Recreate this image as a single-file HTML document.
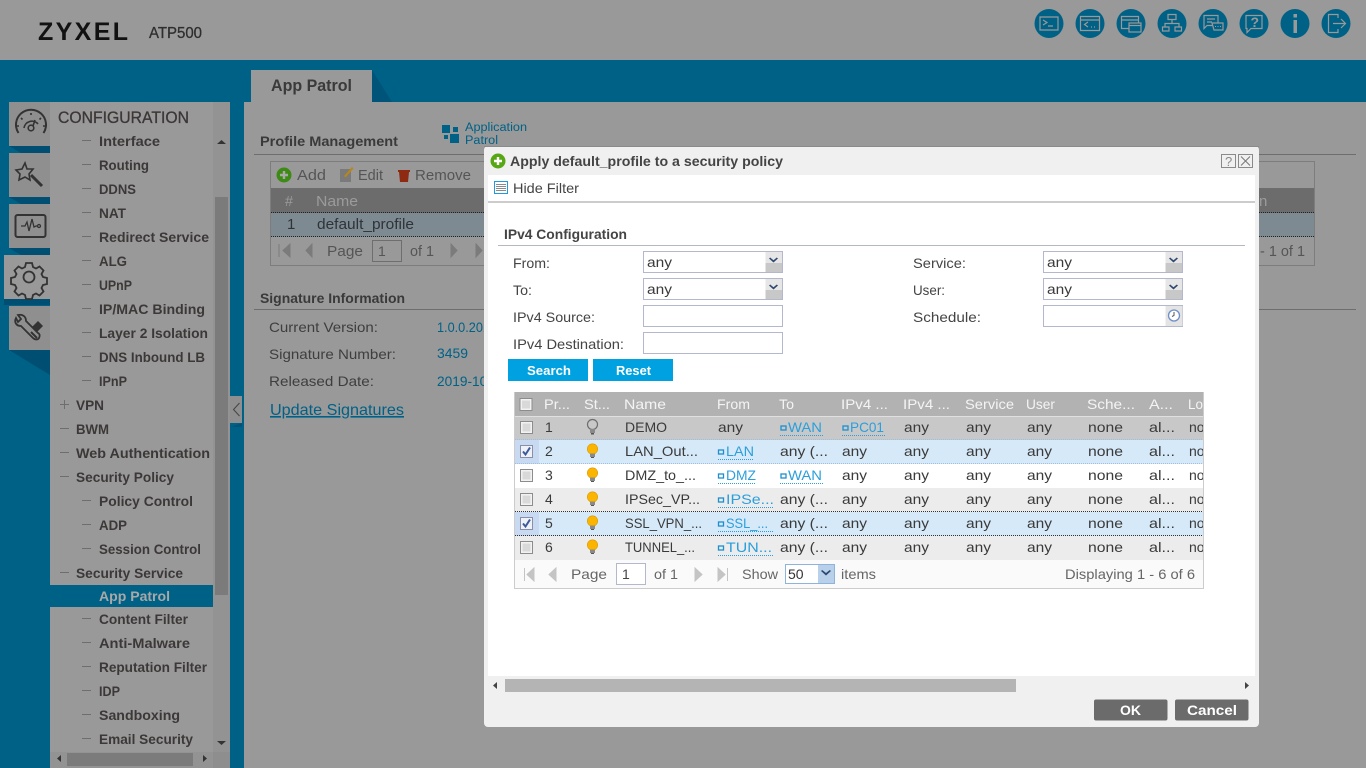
<!DOCTYPE html>
<html><head><meta charset="utf-8"><title>Zyxel ATP500</title>
<style>
html,body{margin:0;padding:0;width:1366px;height:768px;overflow:hidden;background:#006186}
svg{display:block}
text{font-family:"Liberation Sans",sans-serif;font-size:14px;fill:#3e3e3e}
.n text{font-weight:bold;fill:#3d3838;font-size:14px}
.d text{fill:#444;font-size:14px}
.g text{fill:#3a3a3a;font-size:14px}
.h text{fill:#f4f4f4;font-size:14px}
.i{fill:none;stroke:#999;stroke-width:1.2}
.t{fill:none;stroke:#333;stroke-width:1.6}
</style></head><body>
<svg xmlns="http://www.w3.org/2000/svg" width="1366" height="768" viewBox="0 0 1366 768">
<defs>
<clipPath id="gc"><rect x="515" y="392" width="688" height="196"/></clipPath>
<g id="bulb"><circle cx="0" cy="-1" r="5.2" fill="#fbb400" stroke="#d99b00" stroke-width=".6"/><path d="M-2.5 3.500h5v3.500h-5z" fill="#8a8a8a"/><path d="M-1.500 7h3v1h-3z" fill="#555"/></g>
<g id="cb"><rect x=".5" y=".5" width="12" height="12" fill="#f2f2f2" stroke="#8c8c8c"/><rect x="2.500" y="2.500" width="8" height="8" fill="#d9d9d9"/></g>
<g id="cbc"><rect x=".5" y=".5" width="12" height="12" fill="#eef1f7" stroke="#8a8fa8"/><path d="M3 6.500l2.500 3 4.500-7" fill="none" stroke="#3c5a9a" stroke-width="2"/></g>
<g id="sel"><rect x=".5" y=".5" width="139" height="21" fill="#fff" stroke="#b4b8cc"/><rect x="122.500" y="1" width="16.500" height="20" fill="#e6e6e6"/><rect x="122.500" y="12" width="16.500" height="9" fill="#c8c8c8"/><path d="M126 7.500l4.500 4 4.500-4-1.200-1-3.300 2.800-3.300-2.800z" fill="#2f4870"/></g>
<rect id="inp" x=".5" y=".5" width="139" height="21" fill="#fff" stroke="#b4b8cc"/>
<rect id="lk" x="0" y="0" width="5" height="4" fill="none" stroke="#1d8fd0" stroke-width="1.300"/>
</defs>

<rect width="1366" height="768" fill="#006186"/>
<rect width="1366" height="60" fill="#999"/>

<!-- header -->
<text x="38" y="40" style="font-size:25px;font-weight:bold;fill:#111" textLength="90" lengthAdjust="spacing">ZYXEL</text>
<text x="149" y="38" style="font-size:16px;fill:#2e2e2e;stroke:#2e2e2e;stroke-width:.3" textLength="53" lengthAdjust="spacingAndGlyphs">ATP500</text>

<g fill="#006186">
<circle cx="1049" cy="23.500" r="14.500"/><circle cx="1090" cy="23.500" r="14.500"/><circle cx="1131" cy="23.500" r="14.500"/><circle cx="1172" cy="23.500" r="14.500"/><circle cx="1213" cy="23.500" r="14.500"/><circle cx="1254" cy="23.500" r="14.500"/><circle cx="1295" cy="23.500" r="14.500"/><circle cx="1336" cy="23.500" r="14.500"/>
</g>
<path class="i" d="M1040 17h18v13h-18zM1043 20l4 2.500-4 2.500M1048 26h5"/>
<path class="i" d="M1080.500 16.500h19v14h-19zM1080.500 20h19M1088 22l-3.500 2.500 3.500 2.500M1091 27h1M1094 27h1"/>
<path class="i" d="M1121.500 16.500h17v12h-17zM1121.500 20h17"/>
<rect x="1129" y="23" width="12" height="9" fill="#006186" stroke="#999" stroke-width="1.200"/><path class="i" d="M1129 25.500h12"/>
<path class="i" d="M1168 14.500h8v5h-8zM1172 19.500v4M1165 27v-3.500h14v3.500M1162.500 27h6.500v4h-6.500zM1175 27h6.500v4h-6.500z"/>
<path class="i" d="M1204 15.500h14v10h-11l-3 3zM1207 19h8M1207 22h5"/>
<path d="M1212 23h11v7h-9z" fill="#006186" stroke="#999" stroke-width="1.200"/><path d="M1215 26.500h1M1217.500 26.500h1M1220 26.500h1" stroke="#999" fill="none"/>
<path class="i" d="M1246 15.500h16v13h-11l-4 4v-4h-1z"/>
<text x="1250.500" y="27" style="font-size:14px;font-weight:bold;fill:#999">?</text>
<path d="M1293.500 14h3.500v3.500h-3.500zM1293.500 20h3.500v13h-3.500z" fill="#999"/>
<path class="i" d="M1338 18v-3.500h-9.500v18h9.500v-3.500M1333 23.500h12M1341 19l4.500 4.500-4.500 4.500"/>

<!-- tab -->
<path d="M372 70l20 32h-20z" fill="#00547a"/>
<rect x="251" y="70" width="121" height="32" fill="#999"/>
<text x="271" y="91" style="font-size:17px;font-weight:bold;fill:#3a3a3a" textLength="81" lengthAdjust="spacingAndGlyphs">App Patrol</text>

<!-- content -->
<rect x="244" y="102" width="1122" height="666" fill="#999"/>

<!-- left icon tabs -->
<g fill="#004f72">
<path d="M9 146h41v7h-29z"/><path d="M9 197h41v7h-29z"/><path d="M9 248h41v7h-29z"/><path d="M4 299h46v6H4z"/><path d="M9 350h41v25z"/>
</g>
<g fill="#8f8f8f">
<rect x="9" y="102" width="41" height="44"/><rect x="9" y="153" width="41" height="44"/><rect x="9" y="204" width="41" height="44"/><rect x="9" y="306" width="41" height="44"/>
</g>
<rect x="4" y="255" width="46" height="44" fill="#999"/>
<path class="t" style="stroke-width:2" d="M18.500 133a15 15 0 1 1 25 0"/>
<path class="t" d="M24 128a8 8 0 0 1 14-4"/>
<circle class="t" cx="31" cy="128" r="2.800"/>
<path class="t" d="M33 126l2-6M31 113v2M21 118l1.500 1.500M41 118l-1.500 1.500M17 126h2M43 126h2"/>
<path class="t" d="M25 163l2 6 6 0-4 5 1 6-5-3-6 3 1-6-4-4 6-1z"/>
<path d="M31 175l11 11" stroke="#333" stroke-width="3" fill="none"/>
<rect x="15.500" y="215" width="30" height="22" rx="2" class="t" style="stroke-width:2"/>
<path class="t" style="stroke-width:1.300" d="M21 226h4l2-4 2 9 3-12 2 8 2-1h1"/><circle class="t" style="stroke-width:1.300" cx="39" cy="226" r="1.500"/>
<circle class="t" cx="29" cy="277" r="5.500" style="stroke-width:1.800"/>
<path class="t" style="stroke-width:1.800" d="M26 263h6l1 4 3 1.500 3.500-2 4 4-2 3.500 1.500 3 4 1v6l-4 1-1.500 3 2 3.500-4 4-3.500-2-3 1.500-1 4h-6l-1-4-3-1.500-3.500 2-4-4 2-3.500-1.500-3-4-1v-6l4-1 1.500-3-2-3.500 4-4 3.500 2 3-1.500z"/>
<path class="t" style="stroke-width:1.800" d="M16 318c-2 4 0 8 5 8l12 12c2 2 5 2 6 0s1-4-1-5l-12-12c0-5-4-7-8-6l3 4-3 3z"/>
<path d="M32 327l6-6 5 5-6 6z" fill="#333"/>
<path d="M31 332l6 6" stroke="#333" stroke-width="2" fill="none"/>

<!-- sidebar -->
<rect x="50" y="102" width="180" height="666" fill="#999"/>
<rect x="213" y="102" width="17" height="650" fill="#939393"/>
<rect x="215" y="197" width="13" height="398" fill="#7b7b7b"/>
<path d="M217 144h9l-4.500-4z M217 741h9l-4.500 4z" fill="#333"/>
<rect x="50" y="585" width="163" height="22" fill="#006186"/>
<rect x="50" y="752" width="180" height="16" fill="#939393"/>
<rect x="67" y="753" width="126" height="13" fill="#7b7b7b"/>
<path d="M61 755v7l-4-3.500zM203 755v7l4-3.500z" fill="#333"/>
<rect x="213" y="752" width="17" height="16" fill="#8e8e8e"/>
<text x="58" y="123" style="font-size:17px;fill:#3c3636;stroke:#3c3636;stroke-width:.3" textLength="131" lengthAdjust="spacingAndGlyphs">CONFIGURATION</text>
<g stroke="#6e6e6e" stroke-width="1" fill="none">
<path d="M82 140.500h9M82 164.500h9M82 188.500h9M82 212.500h9M82 236.500h9M82 260.500h9M82 284.500h9M82 308.500h9M82 332.500h9M82 356.500h9M82 380.500h9M60 404.500h9M64.500 400v9M60 428.500h9M60 452.500h9M60 476.500h9M82 500.500h9M82 524.500h9M82 548.500h9M60 572.500h9M82 618.500h9M82 642.500h9M82 666.500h9M82 690.500h9M82 714.500h9M82 738.500h9"/>
</g>
<g class="n">
<text x="99" y="146" textLength="61" lengthAdjust="spacingAndGlyphs">Interface</text>
<text x="99" y="170" textLength="50" lengthAdjust="spacingAndGlyphs">Routing</text>
<text x="99" y="194" textLength="37" lengthAdjust="spacingAndGlyphs">DDNS</text>
<text x="99" y="218" textLength="27" lengthAdjust="spacingAndGlyphs">NAT</text>
<text x="99" y="242" textLength="110" lengthAdjust="spacingAndGlyphs">Redirect Service</text>
<text x="99" y="266" textLength="28" lengthAdjust="spacingAndGlyphs">ALG</text>
<text x="99" y="290" textLength="33" lengthAdjust="spacingAndGlyphs">UPnP</text>
<text x="99" y="314" textLength="106" lengthAdjust="spacingAndGlyphs">IP/MAC Binding</text>
<text x="99" y="338" textLength="109" lengthAdjust="spacingAndGlyphs">Layer 2 Isolation</text>
<text x="99" y="362" textLength="106" lengthAdjust="spacingAndGlyphs">DNS Inbound LB</text>
<text x="99" y="386" textLength="28" lengthAdjust="spacingAndGlyphs">IPnP</text>
<text x="76" y="410" textLength="28" lengthAdjust="spacingAndGlyphs">VPN</text>
<text x="76" y="434" textLength="33" lengthAdjust="spacingAndGlyphs">BWM</text>
<text x="76" y="458" textLength="134" lengthAdjust="spacingAndGlyphs">Web Authentication</text>
<text x="76" y="482" textLength="98" lengthAdjust="spacingAndGlyphs">Security Policy</text>
<text x="99" y="506" textLength="94" lengthAdjust="spacingAndGlyphs">Policy Control</text>
<text x="99" y="530" textLength="28" lengthAdjust="spacingAndGlyphs">ADP</text>
<text x="99" y="554" textLength="102" lengthAdjust="spacingAndGlyphs">Session Control</text>
<text x="76" y="578" textLength="107" lengthAdjust="spacingAndGlyphs">Security Service</text>
<text x="99" y="601" textLength="71" lengthAdjust="spacingAndGlyphs" style="fill:#a8a8a8">App Patrol</text>
<text x="99" y="624" textLength="89" lengthAdjust="spacingAndGlyphs">Content Filter</text>
<text x="99" y="648" textLength="91" lengthAdjust="spacingAndGlyphs">Anti-Malware</text>
<text x="99" y="672" textLength="108" lengthAdjust="spacingAndGlyphs">Reputation Filter</text>
<text x="99" y="696" textLength="21" lengthAdjust="spacingAndGlyphs">IDP</text>
<text x="99" y="720" textLength="81" lengthAdjust="spacingAndGlyphs">Sandboxing</text>
<text x="99" y="744" textLength="94" lengthAdjust="spacingAndGlyphs">Email Security</text>
</g>
<!-- collapse handle -->
<path d="M230 427h12v-4z" fill="#00547a"/>
<rect x="230" y="396" width="12" height="27" fill="#8f8f8f"/>
<path d="M239.500 403l-6 6.500 6 6.500" fill="none" stroke="#444" stroke-width="1"/>

<!-- profile management -->
<text x="260" y="146" style="font-size:14px;font-weight:bold;fill:#3a3a3a" textLength="138" lengthAdjust="spacingAndGlyphs">Profile Management</text>
<path d="M254 154.500h1102" stroke="#6e6e6e"/>
<g fill="#006186"><rect x="442" y="125" width="8" height="8"/><rect x="453" y="127" width="5" height="5"/><rect x="444" y="135" width="4" height="4"/><rect x="450" y="134" width="9" height="9"/></g>
<text x="465" y="131" style="font-size:11.500px;fill:#006186" textLength="62" lengthAdjust="spacingAndGlyphs">Application</text>
<text x="465" y="144" style="font-size:11.500px;fill:#006186" textLength="33" lengthAdjust="spacingAndGlyphs">Patrol</text>

<rect x="270.500" y="161.500" width="1044" height="104" fill="none" stroke="#7d7d7d"/>
<circle cx="284" cy="175" r="7.500" fill="#3d8a14"/><path d="M280 175h8M284 171v8" stroke="#a8a8a8" stroke-width="2.400"/>
<text x="297" y="180" style="font-size:15px;fill:#555" textLength="29" lengthAdjust="spacingAndGlyphs">Add</text>
<rect x="340" y="169" width="11" height="13" fill="#7a7a7a"/><path d="M344 176l8-9 1.500 1.500-8 9z" fill="#b8861b"/>
<text x="358" y="180" style="font-size:15px;fill:#555" textLength="25" lengthAdjust="spacingAndGlyphs">Edit</text>
<path d="M398 170h12v2h-1l-1 10h-8l-1-10h-1z" fill="#8e2a12"/>
<text x="415" y="180" style="font-size:15px;fill:#555" textLength="56" lengthAdjust="spacingAndGlyphs">Remove</text>
<rect x="271" y="188" width="1043" height="25" fill="#6c6c6c"/>
<rect x="271" y="213" width="1043" height="24" fill="#7e8a92"/>
<path d="M271 212.500h1043M271 236.500h1043" stroke="#222" stroke-dasharray="1 1"/>
<text x="285" y="206" style="font-size:15px;fill:#9b9b9b" textLength="8" lengthAdjust="spacingAndGlyphs">#</text>
<text x="316" y="206" style="font-size:15px;fill:#9b9b9b" textLength="42" lengthAdjust="spacingAndGlyphs">Name</text>
<text x="287" y="229" style="font-size:15px;fill:#2e3338">1</text>
<text x="317" y="229" style="font-size:15px;fill:#2e3338" textLength="97" lengthAdjust="spacingAndGlyphs">default_profile</text>
<path d="M279 244v13M290 244l-7 6.500 7 6.500zM312 244l-6 6.500 6 6.500zM451 244l6 6.500-6 6.500zM476 244l6 6.500-6 6.500z" fill="#7b7b7b" stroke="#7b7b7b"/>
<text x="327" y="256" style="font-size:15px;fill:#555" textLength="36" lengthAdjust="spacingAndGlyphs">Page</text>
<rect x="372.500" y="240.500" width="29" height="21" fill="#999" stroke="#6e6e6e"/>
<text x="378" y="256" style="font-size:14px;fill:#555">1</text>
<text x="410" y="256" style="font-size:15px;fill:#555" textLength="24" lengthAdjust="spacingAndGlyphs">of 1</text>
<text x="1260" y="256" style="font-size:15px;fill:#555" textLength="45" lengthAdjust="spacingAndGlyphs">- 1 of 1</text>
<text x="1259" y="206" style="font-size:15px;fill:#9b9b9b">n</text>

<text x="260" y="303" style="font-size:14px;font-weight:bold;fill:#3a3a3a" textLength="145" lengthAdjust="spacingAndGlyphs">Signature Information</text>
<path d="M254 309.500h1102" stroke="#6e6e6e"/>
<text x="269" y="332" style="font-size:14px;fill:#3e3e3e" textLength="109" lengthAdjust="spacingAndGlyphs">Current Version:</text>
<text x="269" y="359" style="font-size:14px;fill:#3e3e3e" textLength="127" lengthAdjust="spacingAndGlyphs">Signature Number:</text>
<text x="269" y="386" style="font-size:14px;fill:#3e3e3e" textLength="105" lengthAdjust="spacingAndGlyphs">Released Date:</text>
<text x="437" y="332" style="font-size:14px;fill:#006186" textLength="60" lengthAdjust="spacingAndGlyphs">1.0.0.2019</text>
<text x="437" y="358" style="font-size:14px;fill:#006186" textLength="31" lengthAdjust="spacingAndGlyphs">3459</text>
<text x="437" y="386" style="font-size:14px;fill:#006186" textLength="70" lengthAdjust="spacingAndGlyphs">2019-10-10</text>
<text x="270" y="415" style="font-size:16px;fill:#006186;text-decoration:underline" textLength="134" lengthAdjust="spacingAndGlyphs">Update Signatures</text>

<!-- modal -->
<rect x="484" y="146" width="775" height="581" rx="4" fill="#f0f0f0"/>
<path d="M484 146.500h775" stroke="#8a8a8a"/>
<rect x="488" y="175" width="767" height="501" fill="#fff"/>
<circle cx="498" cy="161" r="7.500" fill="#57a614"/><path d="M494 161h8M498 157v8" stroke="#fff" stroke-width="2.400"/>
<text x="510" y="166" style="font-size:14px;font-weight:bold;fill:#444" textLength="273" lengthAdjust="spacingAndGlyphs">Apply default_profile to a security policy</text>
<rect x="1221.500" y="154.500" width="14" height="13" fill="none" stroke="#8a8a8a"/>
<text x="1225" y="166" style="font-size:13px;fill:#8a8a8a">?</text>
<rect x="1238.500" y="154.500" width="14" height="13" fill="none" stroke="#8a8a8a"/>
<path d="M1241 156.500l9 9M1250 156.500l-9 9" stroke="#777" fill="none"/>

<rect x="494.500" y="181.500" width="13" height="12" fill="#fff" stroke="#1f9bdc"/>
<path d="M496 184.500h10M496 186.500h10M496 188.500h10M496 190.500h10" stroke="#8a8a8a"/>
<text x="513" y="193" style="font-size:14px;fill:#444" textLength="66" lengthAdjust="spacingAndGlyphs">Hide Filter</text>
<rect x="488" y="201" width="767" height="2" fill="#ccc"/>

<text x="504" y="239" style="font-size:14px;font-weight:bold;fill:#444" textLength="123" lengthAdjust="spacingAndGlyphs">IPv4 Configuration</text>
<path d="M498 245.500h747" stroke="#b4b8c0"/>

<g class="d">
<text x="513" y="268" textLength="37" lengthAdjust="spacingAndGlyphs">From:</text>
<text x="513" y="295" textLength="19" lengthAdjust="spacingAndGlyphs">To:</text>
<text x="513" y="322" textLength="82" lengthAdjust="spacingAndGlyphs">IPv4 Source:</text>
<text x="513" y="349" textLength="111" lengthAdjust="spacingAndGlyphs">IPv4 Destination:</text>
<text x="913" y="268" textLength="53" lengthAdjust="spacingAndGlyphs">Service:</text>
<text x="913" y="295" textLength="32" lengthAdjust="spacingAndGlyphs">User:</text>
<text x="913" y="322" textLength="68" lengthAdjust="spacingAndGlyphs">Schedule:</text>
</g>
<use href="#sel" x="643" y="251"/><use href="#sel" x="643" y="278"/><use href="#inp" x="643" y="305"/><use href="#inp" x="643" y="332"/>
<use href="#sel" x="1043" y="251"/><use href="#sel" x="1043" y="278"/><use href="#inp" x="1043" y="305"/>
<rect x="1165.500" y="306" width="17" height="20" fill="#e4e4e4"/>
<circle cx="1174" cy="315.500" r="5.500" fill="#fff" stroke="#6f8fc8" stroke-width="1.300"/><path d="M1174 312v3.500l-2 1" stroke="#555" fill="none"/>
<g class="g">
<text x="647" y="267" textLength="25" lengthAdjust="spacingAndGlyphs">any</text>
<text x="647" y="294" textLength="25" lengthAdjust="spacingAndGlyphs">any</text>
<text x="1047" y="267" textLength="25" lengthAdjust="spacingAndGlyphs">any</text>
<text x="1047" y="294" textLength="25" lengthAdjust="spacingAndGlyphs">any</text>
</g>
<rect x="508" y="359" width="80" height="22" fill="#00a1e0"/>
<rect x="593" y="359" width="80" height="22" fill="#00a1e0"/>
<text x="527" y="375" style="font-size:13px;font-weight:bold;fill:#fff" textLength="44" lengthAdjust="spacingAndGlyphs">Search</text>
<text x="616" y="375" style="font-size:13px;font-weight:bold;fill:#fff" textLength="35" lengthAdjust="spacingAndGlyphs">Reset</text>

<!-- grid -->
<rect x="514.500" y="392.500" width="689" height="196" fill="#fafafa" stroke="#ccc"/>
<rect x="515" y="392" width="688" height="24" fill="#b2b2b2"/>
<path d="M515 416.500h688" stroke="#e0e0e0"/>
<rect x="515" y="417" width="688" height="23" fill="#c8c8c8"/>
<rect x="515" y="440" width="688" height="24" fill="#d6e9f8"/>
<rect x="515" y="464" width="688" height="24" fill="#fff"/>
<rect x="515" y="488" width="688" height="24" fill="#ececec"/>
<rect x="515" y="512" width="688" height="24" fill="#d6e9f8"/>
<rect x="515" y="536" width="688" height="24" fill="#ececec"/>
<rect x="515" y="440" width="24" height="24" fill="#c8daf2"/>
<rect x="515" y="512" width="24" height="24" fill="#c8daf2"/>
<path d="M515 439.500h688M515 463.500h688" stroke="#9fbfe0" stroke-dasharray="1 1"/>
<path d="M515 511.500h688M515 535.500h688" stroke="#333" stroke-dasharray="1 1"/>

<use href="#cb" x="519.500" y="398"/>
<use href="#cb" x="520" y="421"/><use href="#cbc" x="520" y="445"/><use href="#cb" x="520" y="469"/><use href="#cb" x="520" y="493"/><use href="#cbc" x="520" y="517"/><use href="#cb" x="520" y="541"/>

<g class="h" clip-path="url(#gc)">
<text x="544" y="409" textLength="26" lengthAdjust="spacingAndGlyphs">Pr...</text>
<text x="584" y="409" textLength="26" lengthAdjust="spacingAndGlyphs">St...</text>
<text x="624" y="409" textLength="42" lengthAdjust="spacingAndGlyphs">Name</text>
<text x="717" y="409" textLength="33" lengthAdjust="spacingAndGlyphs">From</text>
<text x="779" y="409" textLength="15" lengthAdjust="spacingAndGlyphs">To</text>
<text x="841" y="409" textLength="47" lengthAdjust="spacingAndGlyphs">IPv4 ...</text>
<text x="903" y="409" textLength="47" lengthAdjust="spacingAndGlyphs">IPv4 ...</text>
<text x="965" y="409" textLength="49" lengthAdjust="spacingAndGlyphs">Service</text>
<text x="1026" y="409" textLength="29" lengthAdjust="spacingAndGlyphs">User</text>
<text x="1087" y="409" textLength="48" lengthAdjust="spacingAndGlyphs">Sche...</text>
<text x="1149" y="409" textLength="24" lengthAdjust="spacingAndGlyphs">A...</text>
<text x="1188" y="409" textLength="15" lengthAdjust="spacingAndGlyphs">Lo</text>
</g>

<circle cx="592.500" cy="424.500" r="5" fill="none" stroke="#6e6e6e" stroke-width="1.200"/><path d="M590 429h5v4h-5z" fill="#8a8a8a"/><path d="M591 433h3v1.500h-3z" fill="#555"/>
<use href="#bulb" x="592.500" y="450"/><use href="#bulb" x="592.500" y="474"/><use href="#bulb" x="592.500" y="498"/><use href="#bulb" x="592.500" y="522"/><use href="#bulb" x="592.500" y="546"/>

<g class="g" clip-path="url(#gc)">
<text x="545" y="432">1</text><text x="545" y="456">2</text><text x="545" y="480">3</text><text x="545" y="504">4</text><text x="545" y="528">5</text><text x="545" y="552">6</text>
<text x="625" y="432" textLength="42" lengthAdjust="spacingAndGlyphs">DEMO</text>
<text x="625" y="456" textLength="73" lengthAdjust="spacingAndGlyphs">LAN_Out...</text>
<text x="625" y="480" textLength="71" lengthAdjust="spacingAndGlyphs">DMZ_to_...</text>
<text x="625" y="504" textLength="75" lengthAdjust="spacingAndGlyphs">IPSec_VP...</text>
<text x="625" y="528" textLength="77" lengthAdjust="spacingAndGlyphs">SSL_VPN_...</text>
<text x="625" y="552" textLength="70" lengthAdjust="spacingAndGlyphs">TUNNEL_...</text>
<text x="718" y="432" textLength="25" lengthAdjust="spacingAndGlyphs">any</text>
<text x="780" y="456" textLength="48" lengthAdjust="spacingAndGlyphs">any (...</text>
<text x="780" y="504" textLength="48" lengthAdjust="spacingAndGlyphs">any (...</text>
<text x="780" y="528" textLength="48" lengthAdjust="spacingAndGlyphs">any (...</text>
<text x="780" y="552" textLength="48" lengthAdjust="spacingAndGlyphs">any (...</text>
<text x="842" y="456" textLength="25" lengthAdjust="spacingAndGlyphs">any</text><text x="842" y="480" textLength="25" lengthAdjust="spacingAndGlyphs">any</text><text x="842" y="504" textLength="25" lengthAdjust="spacingAndGlyphs">any</text><text x="842" y="528" textLength="25" lengthAdjust="spacingAndGlyphs">any</text><text x="842" y="552" textLength="25" lengthAdjust="spacingAndGlyphs">any</text>
<text x="904" y="432" textLength="25" lengthAdjust="spacingAndGlyphs">any</text><text x="904" y="456" textLength="25" lengthAdjust="spacingAndGlyphs">any</text><text x="904" y="480" textLength="25" lengthAdjust="spacingAndGlyphs">any</text><text x="904" y="504" textLength="25" lengthAdjust="spacingAndGlyphs">any</text><text x="904" y="528" textLength="25" lengthAdjust="spacingAndGlyphs">any</text><text x="904" y="552" textLength="25" lengthAdjust="spacingAndGlyphs">any</text>
<text x="966" y="432" textLength="25" lengthAdjust="spacingAndGlyphs">any</text><text x="966" y="456" textLength="25" lengthAdjust="spacingAndGlyphs">any</text><text x="966" y="480" textLength="25" lengthAdjust="spacingAndGlyphs">any</text><text x="966" y="504" textLength="25" lengthAdjust="spacingAndGlyphs">any</text><text x="966" y="528" textLength="25" lengthAdjust="spacingAndGlyphs">any</text><text x="966" y="552" textLength="25" lengthAdjust="spacingAndGlyphs">any</text>
<text x="1027" y="432" textLength="25" lengthAdjust="spacingAndGlyphs">any</text><text x="1027" y="456" textLength="25" lengthAdjust="spacingAndGlyphs">any</text><text x="1027" y="480" textLength="25" lengthAdjust="spacingAndGlyphs">any</text><text x="1027" y="504" textLength="25" lengthAdjust="spacingAndGlyphs">any</text><text x="1027" y="528" textLength="25" lengthAdjust="spacingAndGlyphs">any</text><text x="1027" y="552" textLength="25" lengthAdjust="spacingAndGlyphs">any</text>
<text x="1088" y="432" textLength="35" lengthAdjust="spacingAndGlyphs">none</text><text x="1088" y="456" textLength="35" lengthAdjust="spacingAndGlyphs">none</text><text x="1088" y="480" textLength="35" lengthAdjust="spacingAndGlyphs">none</text><text x="1088" y="504" textLength="35" lengthAdjust="spacingAndGlyphs">none</text><text x="1088" y="528" textLength="35" lengthAdjust="spacingAndGlyphs">none</text><text x="1088" y="552" textLength="35" lengthAdjust="spacingAndGlyphs">none</text>
<text x="1149" y="432" textLength="26" lengthAdjust="spacingAndGlyphs">al...</text><text x="1149" y="456" textLength="26" lengthAdjust="spacingAndGlyphs">al...</text><text x="1149" y="480" textLength="26" lengthAdjust="spacingAndGlyphs">al...</text><text x="1149" y="504" textLength="26" lengthAdjust="spacingAndGlyphs">al...</text><text x="1149" y="528" textLength="26" lengthAdjust="spacingAndGlyphs">al...</text><text x="1149" y="552" textLength="26" lengthAdjust="spacingAndGlyphs">al...</text>
<text x="1189" y="432">no</text><text x="1189" y="456">no</text><text x="1189" y="480">no</text><text x="1189" y="504">no</text><text x="1189" y="528">no</text><text x="1189" y="552">no</text>
</g>
<!-- links -->
<use href="#lk" x="781" y="426"/><use href="#lk" x="843" y="426"/><use href="#lk" x="718.500" y="450"/><use href="#lk" x="718.500" y="474"/><use href="#lk" x="781" y="474"/><use href="#lk" x="718.500" y="498"/><use href="#lk" x="718.500" y="522"/><use href="#lk" x="718.500" y="546"/>
<text x="788" y="432" style="fill:#2b9fdc" textLength="34" lengthAdjust="spacingAndGlyphs">WAN</text>
<text x="850" y="432" style="fill:#2b9fdc" textLength="34" lengthAdjust="spacingAndGlyphs">PC01</text>
<text x="726" y="456" style="fill:#2b9fdc" textLength="28" lengthAdjust="spacingAndGlyphs">LAN</text>
<text x="726" y="480" style="fill:#2b9fdc" textLength="30" lengthAdjust="spacingAndGlyphs">DMZ</text>
<text x="788" y="480" style="fill:#2b9fdc" textLength="34" lengthAdjust="spacingAndGlyphs">WAN</text>
<text x="726" y="504" style="fill:#2b9fdc" textLength="48" lengthAdjust="spacingAndGlyphs">IPSe...</text>
<text x="726" y="528" style="fill:#2b9fdc" textLength="42" lengthAdjust="spacingAndGlyphs">SSL_...</text>
<text x="726" y="552" style="fill:#2b9fdc" textLength="46" lengthAdjust="spacingAndGlyphs">TUN...</text>
<g stroke="#2b9fdc" stroke-dasharray="1 1" fill="none">
<path d="M780 435.500h43M842 435.500h43M718 459.500h36M718 483.500h38M780 483.500h43M718 507.500h56M718 531.500h56M718 555.500h56"/>
</g>

<!-- grid pager -->
<path d="M524.500 568v13M534 568l-7 6.500 7 6.500zM556 568l-7 6.500 7 6.500zM695 568l7 6.500-7 6.500zM718 568l7 6.500-7 6.500zM727.500 568v13" fill="#c4c4c4" stroke="#c4c4c4"/>
<text x="571" y="579" style="font-size:14px;fill:#666" textLength="36" lengthAdjust="spacingAndGlyphs">Page</text>
<rect x="616.500" y="563.500" width="29" height="21" fill="#fff" stroke="#b4b8cc"/>
<text x="622" y="579" style="font-size:14px;fill:#444">1</text>
<text x="654" y="579" style="font-size:14px;fill:#666" textLength="24" lengthAdjust="spacingAndGlyphs">of 1</text>
<text x="742" y="579" style="font-size:14px;fill:#666" textLength="36" lengthAdjust="spacingAndGlyphs">Show</text>
<rect x="785.500" y="564.500" width="49" height="19" fill="#fff" stroke="#8fb4dc"/>
<rect x="818" y="565" width="16" height="18" fill="#b8d0ea"/>
<path d="M821 571l5 4.500 5-4.500-1.200-1-3.800 3-3.800-3z" fill="#2f4870"/>
<text x="788" y="579" style="font-size:14px;fill:#333">50</text>
<text x="841" y="579" style="font-size:14px;fill:#666" textLength="35" lengthAdjust="spacingAndGlyphs">items</text>
<text x="1065" y="579" style="font-size:14px;fill:#666" textLength="130" lengthAdjust="spacingAndGlyphs">Displaying 1 - 6 of 6</text>

<!-- modal scrollbar -->
<rect x="488" y="676" width="767" height="20" fill="#f0f0f0"/>
<rect x="505" y="679" width="511" height="13" fill="#b4b4b4"/>
<path d="M497 682v7l-4-3.500zM1245 682v7l4-3.500z" fill="#444"/>
<rect x="1094" y="699.500" width="73.500" height="21" rx="2" fill="#6b6b6b"/>
<rect x="1175" y="699.500" width="73.500" height="21" rx="2" fill="#6b6b6b"/>
<text x="1120" y="715" style="font-size:14px;font-weight:bold;fill:#fff" textLength="21" lengthAdjust="spacingAndGlyphs">OK</text>
<text x="1187" y="715" style="font-size:14px;font-weight:bold;fill:#fff" textLength="50" lengthAdjust="spacingAndGlyphs">Cancel</text>
</svg>
</body></html>
